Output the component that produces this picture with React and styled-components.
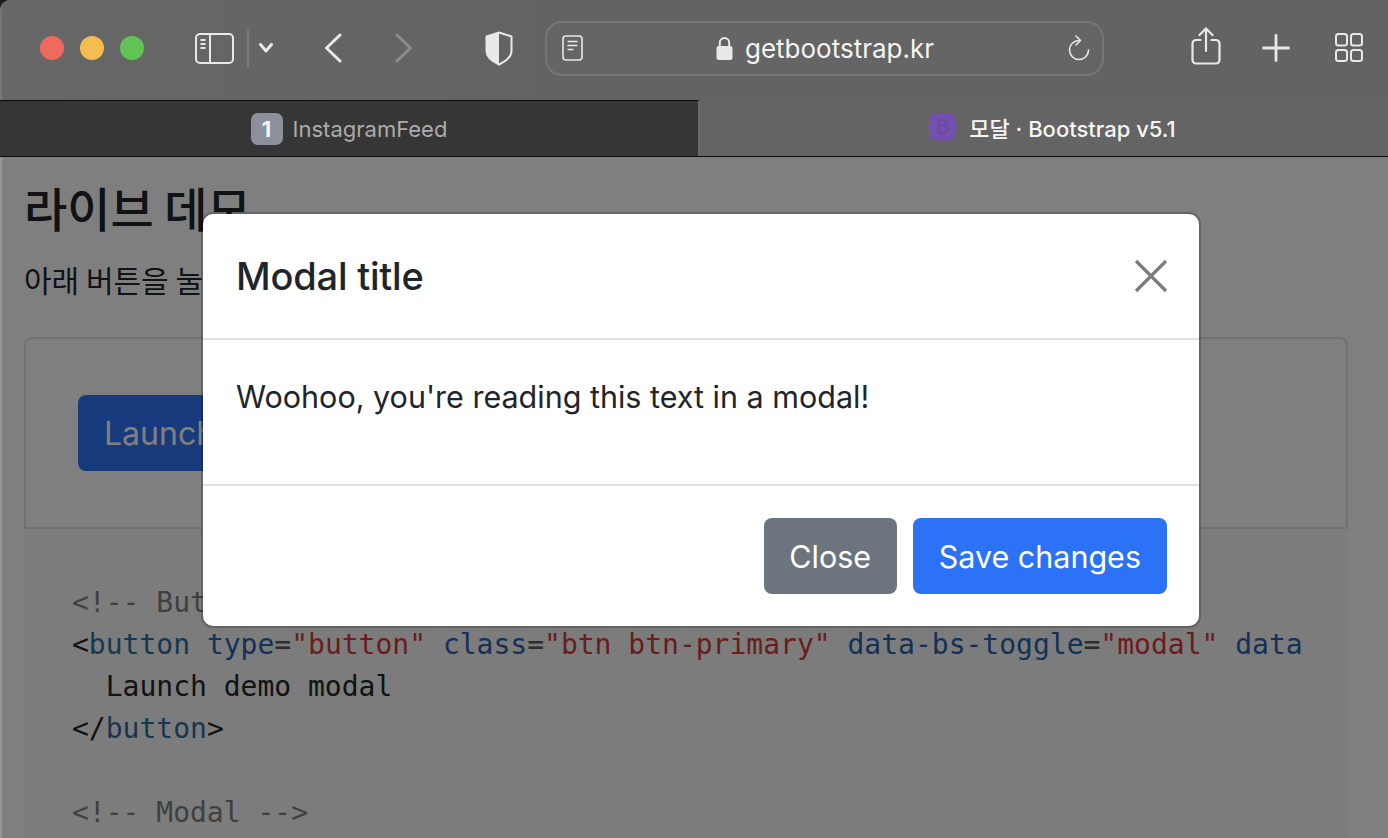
import React from 'react';
import styled, { createGlobalStyle } from 'styled-components';

const GlobalStyle = createGlobalStyle`
  html, body {
    margin: 0;
    padding: 0;
    background: #1c1c1e;
    overflow: hidden;
  }
`;

const Browser = styled.div`
  width: 1388px;
  height: 838px;
  display: flex;
  flex-direction: column;
  overflow: hidden;
  border-top-left-radius: 10px;
  background: #636363;
  font-family: Inter, "Noto Sans CJK KR", sans-serif;
`;

const Toolbar = styled.header`
  height: 100px;
  flex: none;
  display: flex;
  align-items: center;
  padding: 0 25px 4px 40px;
  box-sizing: border-box;
  background: linear-gradient(90deg, #676767 0%, #636363 40%, #636363 100%);
  box-shadow: inset 2px 0 0 rgba(255, 255, 255, 0.1);
`;

const Lights = styled.div`
  display: flex;
  gap: 16px;
`;

const Light = styled.span`
  width: 24px;
  height: 24px;
  border-radius: 50%;
  background: ${p => p.$color};
`;

const IconSlot = styled.span`
  display: flex;
  flex: none;
  margin-left: ${p => p.$left || 0}px;
  margin-bottom: ${p => p.$lift || 0}px;
  color: #e9e9e9;
`;

const Divider = styled.span`
  width: 2px;
  height: 37px;
  flex: none;
  margin-left: 13px;
  background: #7b7b7b;
`;

const AddressBar = styled.div`
  width: 559px;
  height: 55px;
  margin-left: 32px;
  padding: 0 12px 0 15px;
  box-sizing: border-box;
  flex: none;
  display: flex;
  align-items: center;
  border: 2px solid #777;
  border-radius: 17px;
  background: #656565;
`;

const Host = styled.div`
  flex: 1;
  display: flex;
  justify-content: center;
  align-items: center;
  gap: 12px;
  padding-right: 1px;
  color: #f4f4f4;
  font-size: 26px;
`;

const TabBar = styled.nav`
  height: 57px;
  flex: none;
  display: flex;
  border-bottom: 1px solid #0c0c0c;
  box-sizing: border-box;
`;

const Tab = styled.div`
  display: flex;
  align-items: center;
  justify-content: center;
  gap: ${p => (p.$active ? 11 : 10)}px;
  box-sizing: border-box;
  font-size: 22px;
  width: ${p => (p.$active ? 688 : 700)}px;
  padding: ${p => (p.$active ? '0 0 3px 15px' : '1px 0 0')};
  background: ${p => (p.$active ? '#646464' : '#363636')};
  color: ${p => (p.$active ? '#f6f6f6' : '#ababab')};
  font-weight: ${p => (p.$active ? 500 : 400)};
  border-top: ${p => (p.$active ? 'none' : '1px solid #0c0c0c')};
  border-right: ${p => (p.$active ? 'none' : '2px solid #6a6a6a')};
`;

const Badge = styled.span`
  width: 32px;
  height: 32px;
  border-radius: 7px;
  background: #8d8f9d;
  color: #f4f4f4;
  font-weight: 700;
  font-size: 22px;
  display: flex;
  align-items: center;
  justify-content: center;
`;

const Page = styled.main`
  position: relative;
  flex: 1;
  background: #fff;
  padding: 21px 40px 0 24px;
  box-sizing: border-box;
  color: #212529;
  overflow: hidden;
`;

const Heading = styled.h2`
  margin: 0;
  font-size: 47px;
  line-height: 58px;
  font-weight: 500;
  font-family: "Noto Sans CJK KR", sans-serif;
`;

const Lead = styled.p`
  margin: 19px 0 0;
  font-size: 30px;
  line-height: 48px;
  font-weight: 400;
  font-family: "Noto Sans CJK KR", sans-serif;
`;

const Example = styled.section`
  margin-top: 34px;
  height: 192px;
  padding: 56px 52px;
  box-sizing: border-box;
  border: 2px solid #dee2e6;
  border-radius: 8px 8px 0 0;
`;

const DemoButton = styled.button`
  height: 76px;
  padding: 0 26px;
  border: 0;
  border-radius: 8px;
  background: #2e74fa;
  color: #fff;
  font: 400 32px Inter, sans-serif;
`;

const CodeBlock = styled.pre`
  margin: 0;
  padding: 53px 0 0 48px;
  height: 320px;
  box-sizing: border-box;
  background: #f8f9fa;
`;

const CodeInner = styled.code`
  display: block;
  width: 1231px;
  overflow: hidden;
  font-family: "DejaVu Sans Mono", monospace;
  font-size: 28px;
  line-height: 42px;
  color: #212529;
`;

const Token = styled.span`
  color: ${p => ({ comment: '#808080', tag: '#2f6f9f', attr: '#2a62ac', str: '#d43a3a', eq: '#5a5a5a' }[p.$kind])};
`;

const Backdrop = styled.div`
  position: absolute;
  inset: 0;
  background: rgba(0, 0, 0, 0.5);
  box-shadow: inset 2px 0 0 rgba(255, 255, 255, 0.2);
  display: flex;
  justify-content: center;
  padding: 57px 0 0 14px;
  box-sizing: border-box;
`;

const Modal = styled.div`
  width: 996px;
  height: 412px;
  flex: none;
  display: flex;
  flex-direction: column;
  background: #fff;
  border-radius: 10px;
  box-shadow: 0 0 0 2px rgba(0, 0, 0, 0.2);
`;

const ModalHeader = styled.div`
  height: 126px;
  flex: none;
  display: flex;
  align-items: center;
  justify-content: space-between;
  padding: 0 31px 0 33px;
  box-sizing: border-box;
  border-bottom: 2px solid #dee2e6;
`;

const ModalTitle = styled.h5`
  margin: 0;
  font-size: 38px;
  font-weight: 500;
  letter-spacing: -0.2px;
  color: #212529;
`;

const ModalBody = styled.div`
  height: 146px;
  flex: none;
  padding: 35px 33px 0;
  box-sizing: border-box;
  font-size: 30.5px;
  line-height: 44px;
  color: #212529;
  border-bottom: 2px solid #dee2e6;
`;

const ModalFooter = styled.div`
  flex: 1;
  display: flex;
  justify-content: flex-end;
  gap: 16px;
  padding: 32px 32px 32px 0;
  box-sizing: border-box;
`;

const FooterButton = styled.button`
  height: 76px;
  padding: 0 ${p => (p.$primary ? 26 : 25.5)}px;
  border: 0;
  border-radius: 8px;
  background: ${p => (p.$primary ? '#2b72f6' : '#6c757d')};
  color: #fff;
  font: 400 30.5px Inter, sans-serif;
`;

const CloseIcon = styled.svg`
  width: 34px;
  height: 34px;
  stroke: #7d7d7d;
  stroke-width: 3.2;
`;

const line = 'currentColor';

const SidebarIcon = () => (
  <svg width="39" height="31" viewBox="0 0 39 31" fill="none" stroke={line} strokeWidth="2">
    <rect x="1" y="1" width="37" height="29" rx="4" />
    <path d="M15 1v29" />
    <path d="M5.5 7h5M5.5 11h5M5.5 15h5" />
  </svg>
);

const Chevron = ({ d, w, h, color, sw = 3 }) => (
  <svg width={w} height={h} viewBox={`0 0 ${w} ${h}`} fill="none" stroke={color || line} strokeWidth={sw} strokeLinecap="round" strokeLinejoin="round">
    <path d={d} />
  </svg>
);

const ShieldIcon = () => (
  <svg width="28" height="35" viewBox="0 0 28 35" fill="none">
    <path d="M14 1.5 26.5 5.5V20c0 6-5 10-12.500 13.500C6.500 30 1.500 26 1.500 20V5.500Z" stroke="currentColor" strokeWidth="2" />
    <path d="M14 1.500 1.500 5.500V20c0 6 5 10 12.500 13.500Z" fill="currentColor" />
  </svg>
);

const ReaderIcon = () => (
  <svg width="21" height="26" viewBox="0 0 21 26" fill="none" stroke="currentColor" strokeWidth="1.600">
    <rect x="1" y="1" width="19" height="24" rx="3" />
    <path d="M5.500 6.500h10M5.500 10.500h10M5.500 14.500h6" />
  </svg>
);

const LockIcon = () => (
  <svg width="17" height="24" viewBox="0 0 17 24" fill="none">
    <path d="M3.800 11V6.800a4.700 4.700 0 0 1 9.400 0V11" stroke="currentColor" strokeWidth="2" />
    <rect x="0.500" y="10" width="16" height="14" rx="2.500" fill="currentColor" />
  </svg>
);

const ReloadIcon = () => (
  <svg width="22" height="26" viewBox="0 0 22 26" fill="none" stroke="currentColor" strokeWidth="1.600" strokeLinecap="round" strokeLinejoin="round">
    <path d="M11 5.500a9.500 9.500 0 1 0 9.500 9.500" />
    <path d="M8 1l4.500 4.500L8 10" />
  </svg>
);

const ShareIcon = () => (
  <svg width="30" height="38" viewBox="0 0 30 38" fill="none" stroke="currentColor" strokeWidth="2.200" strokeLinecap="round" strokeLinejoin="round">
    <path d="M9.500 13H5a3.500 3.500 0 0 0-3.500 3.500V33A3.500 3.500 0 0 0 5 36.500h20a3.500 3.500 0 0 0 3.500-3.500V16.500A3.500 3.500 0 0 0 25 13h-4.500" />
    <path d="M15 24V2M8.500 8 15 1.500 21.500 8" />
  </svg>
);

const PlusIcon = () => (
  <svg width="28" height="28" viewBox="0 0 28 28" fill="none" stroke="currentColor" strokeWidth="2.800" strokeLinecap="round">
    <path d="M14 1.500v25M1.500 14h25" />
  </svg>
);

const TabsIcon = () => (
  <svg width="28" height="29" viewBox="0 0 28 29" fill="none" stroke="currentColor" strokeWidth="2">
    <rect x="1" y="1" width="11" height="11.500" rx="2.500" />
    <rect x="16" y="1" width="11" height="11.500" rx="2.500" />
    <rect x="1" y="17" width="11" height="11" rx="2.500" />
    <rect x="16" y="17" width="11" height="11" rx="2.500" />
  </svg>
);

const BootstrapLogo = () => (
  <svg width="31" height="30" viewBox="0 0 31 30">
    <path d="M6 1.500h19c1.800 0 2.500 1 2.500 3 0 5 .3 8 3 10.500-2.700 2.500-3 5.500-3 10.500 0 2-.7 3-2.500 3H6c-1.800 0-2.500-1-2.500-3 0-5-.3-8-3-10.500 2.700-2.500 3-5.500 3-10.500 0-2 .7-3 2.500-3Z" fill="#7450b0" />
    <text x="15.500" y="22" textAnchor="middle" fontSize="20" fontWeight="700" fontFamily="Inter, sans-serif" fill="#6a4aa2">B</text>
  </svg>
);

const App = () => (
  <Browser>
    <GlobalStyle />
    <Toolbar>
      <Lights>
        <Light $color="#ee6a5f" />
        <Light $color="#f5bd4f" />
        <Light $color="#61c454" />
      </Lights>
      <IconSlot $left={51}><SidebarIcon /></IconSlot>
      <Divider />
      <IconSlot $left={10}><Chevron w={14} h={10} d="M1.500 1.500 7 8l5.500-6.500" /></IconSlot>
      <IconSlot $left={51} $lift={1}><Chevron w={18} h={30} d="M16 2 2.500 15 16 28" /></IconSlot>
      <IconSlot $left={53} $lift={1}><Chevron w={18} h={30} color="#8c8c8c" d="M2 2l13.500 13L2 28" /></IconSlot>
      <IconSlot $left={72}><ShieldIcon /></IconSlot>
      <AddressBar>
        <IconSlot><ReaderIcon /></IconSlot>
        <Host>
          <IconSlot><LockIcon /></IconSlot>
          getbootstrap.kr
        </Host>
        <IconSlot><ReloadIcon /></IconSlot>
      </AddressBar>
      <IconSlot $left={87} $lift={5}><ShareIcon /></IconSlot>
      <IconSlot $left={41} $lift={1}><PlusIcon /></IconSlot>
      <IconSlot $left={45} $lift={1}><TabsIcon /></IconSlot>
    </Toolbar>
    <TabBar>
      <Tab>
        <Badge>1</Badge>
        InstagramFeed
      </Tab>
      <Tab $active>
        <BootstrapLogo />
        모달 · Bootstrap v5.1
      </Tab>
    </TabBar>
    <Page>
      <Heading>라이브 데모</Heading>
      <Lead>아래 버튼을 눌러 데모 모달을 실행해 보세요.</Lead>
      <Example>
        <DemoButton>Launch demo modal</DemoButton>
      </Example>
      <CodeBlock>
        <CodeInner as="code">
          <Token $kind="comment">{'<!-- Button trigger modal -->'}</Token>{'\n'}
          {'<'}<Token $kind="tag">button</Token> <Token $kind="attr">type</Token><Token $kind="eq">=</Token><Token $kind="str">"button"</Token> <Token $kind="attr">class</Token><Token $kind="eq">=</Token><Token $kind="str">"btn btn-primary"</Token> <Token $kind="attr">data-bs-toggle</Token><Token $kind="eq">=</Token><Token $kind="str">"modal"</Token> <Token $kind="attr">data</Token>{'\n'}
          {'  Launch demo modal\n'}
          {'</'}<Token $kind="tag">button</Token>{'>\n\n'}
          <Token $kind="comment">{'<!-- Modal -->'}</Token>
        </CodeInner>
      </CodeBlock>
      <Backdrop>
        <Modal>
          <ModalHeader>
            <ModalTitle>Modal title</ModalTitle>
            <CloseIcon viewBox="0 0 34 34" fill="none"><path d="M2 2l30 30M32 2 2 32" /></CloseIcon>
          </ModalHeader>
          <ModalBody>Woohoo, you're reading this text in a modal!</ModalBody>
          <ModalFooter>
            <FooterButton>Close</FooterButton>
            <FooterButton $primary>Save changes</FooterButton>
          </ModalFooter>
        </Modal>
      </Backdrop>
    </Page>
  </Browser>
);

export default App;
